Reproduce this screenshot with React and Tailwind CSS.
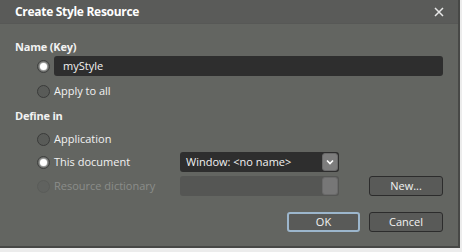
import React from "react";

function Radio({ checked, disabled }) {
  return (
    <span
      className={
        "relative flex h-[13px] w-[13px] shrink-0 items-center justify-center rounded-full border " +
        (disabled
          ? "border-[#5a5c59] bg-[#60625f]"
          : "border-[#3a3b3a] bg-[#595b58]")
      }
    >
      {checked && (
        <span className="h-[7px] w-[7px] rounded-full bg-white shadow-[0_0_2px_1px_rgba(255,255,255,0.6)]" />
      )}
    </span>
  );
}

export default function App() {
  return (
    <div className="h-[252px] w-[462px] bg-[#ececec]" style={{ fontFamily: "'Open Sans', 'Noto Sans', sans-serif" }}>
      <div className="flex h-[248px] w-[460px] flex-col border-b-2 border-r-2 border-[#474846] bg-[#636561] text-[11px] text-[#f2f2f2]">
        <div className="flex h-[24px] shrink-0 items-center justify-between border-b border-[#575856] bg-[#5a5b59] pl-[15px] pr-[14px]">
          <span className="text-[12px] font-bold tracking-[-0.3px] text-white">Create Style Resource</span>
          <svg width="10" height="10" viewBox="0 0 10 10" className="mt-[1px]">
            <path d="M1 1 L9 9 M9 1 L1 9" stroke="#e8e8e8" strokeWidth="1.5" />
          </svg>
        </div>
        <div className="flex flex-1 flex-col pl-[15px]">
          <div className="mt-[15px] h-[16px] font-bold leading-[16px] tracking-[-0.2px]">Name (Key)</div>
          <div className="mt-[1px] flex h-[20px] items-center pl-[22px]">
            <Radio checked />
            <div className="ml-[4px] flex h-[20px] w-[389px] items-center rounded-[3px] bg-[#2e2e2e] pl-[9px]">myStyle</div>
          </div>
          <div className="mt-[5px] flex h-[20px] items-center pl-[22px]">
            <Radio />
            <span className="ml-[4px]">Apply to all</span>
          </div>
          <div className="mt-[7px] h-[16px] font-bold leading-[16px] tracking-[-0.2px]">Define in</div>
          <div className="mt-[5px] flex h-[20px] items-center pl-[22px]">
            <Radio />
            <span className="ml-[4px]">Application</span>
          </div>
          <div className="mt-[3px] flex h-[20px] items-center pl-[22px]">
            <Radio checked />
            <span className="ml-[4px] w-[126px]">This document</span>
            <div className="flex h-[20px] w-[159px] items-center justify-between rounded-[3px] bg-[#2e2e2e] pl-[6px] pr-[1px]">
              <span>Window: &lt;no name&gt;</span>
              <span className="flex h-[18px] w-[16px] items-center justify-center rounded-[3px] border border-[#6a6a6a] bg-[#7d7d7d]">
                <svg width="8" height="6" viewBox="0 0 8 6">
                  <path d="M1 1.5 L4 4.5 L7 1.5" stroke="#ffffff" strokeWidth="1.6" fill="none" />
                </svg>
              </span>
            </div>
          </div>
          <div className="mt-[4px] flex h-[20px] items-center pl-[22px]">
            <Radio disabled />
            <span className="ml-[4px] w-[126px] text-[#8b8d8a]">Resource dictionary</span>
            <div className="flex h-[20px] w-[159px] items-center justify-end rounded-[3px] bg-[#555654] pr-[1px]">
              <span className="h-[18px] w-[16px] rounded-[3px] border border-[#6a6a6a] bg-[#777777]" />
            </div>
            <button className="ml-[30px] flex h-[20px] w-[74px] items-center justify-center rounded-[3px] border border-[#2c2c2c] bg-[#595a58]">New...</button>
          </div>
          <div className="mt-[16px] flex h-[20px] justify-end gap-[9px] pr-[15px]">
            <button className="flex h-[20px] w-[73px] items-center justify-center rounded-[3px] border-2 border-[#9cb6cc] bg-[#595a58]">OK</button>
            <button className="flex h-[20px] w-[74px] items-center justify-center rounded-[3px] border border-[#2c2c2c] bg-[#595a58]">Cancel</button>
          </div>
        </div>
      </div>
    </div>
  );
}
